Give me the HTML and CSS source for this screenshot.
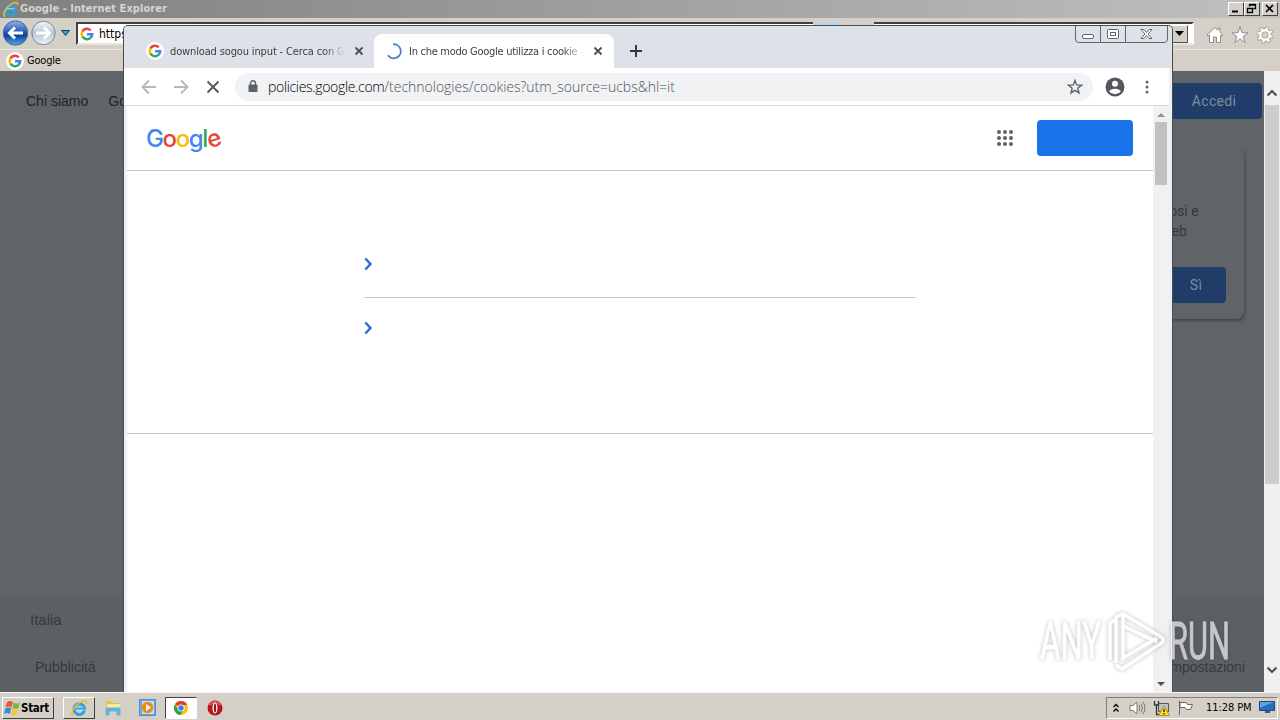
FILE: index.html
```html
<!DOCTYPE html>
<html lang="it">
  <head>
    <meta charset="UTF-8" />
    <meta name="viewport" content="width=device-width, initial-scale=1.0" />
    <title>Desktop</title>
    <link rel="stylesheet" href="styles.css">
  </head>
  <body>
    <svg class="defs" width="0" height="0">
      <symbol id="google-g" viewBox="0 0 18 18">
        <circle cx="9" cy="9" r="9" fill="#fff" />
        <g fill="none" stroke-width="2.6">
          <path d="M4.4 6.5A5.2 5.2 0 0 1 12.7 5.3" stroke="#ea4335" />
          <path d="M4.4 6.5A5.2 5.2 0 0 0 4.5 11.7" stroke="#fbbc05" />
          <path d="M4.5 11.7A5.2 5.2 0 0 0 12.5 12.9" stroke="#34a853" />
          <path d="M12.5 12.9A5.2 5.2 0 0 0 14.2 9.2H9" stroke="#4285f4" />
        </g>
      </symbol>
      <symbol id="ie-logo" viewBox="0 0 18 18">
        <path d="M14.4 11.4A5.3 5.3 0 1 1 14.4 8.9H5" fill="none" stroke="#2f9fe0" stroke-width="3" />
        <path d="M5 8.2H13" stroke="#a7e2fb" stroke-width="1" />
        <path d="M3.2 16.5C-.5 15 4 7 9.5 3.6C14 .8 17.6.8 16.3 4.5" fill="none" stroke="#f3bd27" stroke-width="1.6" />
      </symbol>
    </svg>

    <div class="desktop">
      <section class="ie">
        <header class="ie-title">
          <svg class="ie-icon" width="17" height="17"><use href="#ie-logo" /></svg>
          <h1>Google - Internet Explorer</h1>
          <div class="ie-controls">
            <span><svg width="13" height="11"><path d="M3 8.5h6" stroke="#000" stroke-width="2" /></svg></span>
            <span><svg width="13" height="11"><path d="M4.5 3.5V1.5h6v4h-2M4 2h7M2.5 5.5h5v4h-5zM2 5.5h6" fill="none" stroke="#000" stroke-width="1.3" /></svg></span>
            <span class="close"><svg width="13" height="11"><path d="M3 2l7 7M10 2l-7 7" stroke="#000" stroke-width="1.7" /></svg></span>
          </div>
        </header>
        <div class="ie-toolbar">
          <svg class="ie-nav" width="72" height="28" viewBox="0 0 72 28">
            <defs>
              <linearGradient id="back-fill" x2="0" y2="1">
                <stop offset="0" stop-color="#91b7e9" />
                <stop offset=".45" stop-color="#255cb9" />
                <stop offset=".6" stop-color="#0d3f9c" />
                <stop offset="1" stop-color="#4cb1f1" />
              </linearGradient>
              <linearGradient id="forward-fill" x2="0" y2="1">
                <stop offset="0" stop-color="#f4f7fa" />
                <stop offset=".5" stop-color="#b9c4d1" />
                <stop offset="1" stop-color="#edf5fb" />
              </linearGradient>
            </defs>
            <circle cx="15.500" cy="14" r="12.200" fill="url(#back-fill)" stroke="#4d6484" />
            <circle cx="43.500" cy="14" r="11.700" fill="url(#forward-fill)" stroke="#7b8794" />
            <path d="M23 14H10M15 8.500L9.500 14l5.500 5.500" fill="none" stroke="#fff" stroke-width="3" />
            <path d="M36 14h13M44 8.500l5.500 5.500-5.500 5.500" fill="none" stroke="#fff" stroke-width="3" />
            <path d="M61.500 11.500h8l-4 5z" fill="#3b9bcf" stroke="#123e63" />
          </svg>
          <div class="ie-address">
            <svg width="18" height="18"><use href="#google-g" /></svg>
            <span>https</span>
            <i class="go-buttons"></i>
            <b><svg width="9" height="5"><path d="M0 0h9L4.500 5z" /></svg></b>
          </div>
          <div class="ie-tools">
            <svg width="18" height="18" viewBox="0 0 18 18"><path d="M1 9l8-7.500 3 2.800V2h2v4.200L17 9l-1 1.200-1.500-1.200V16.500h-4V11h-3v5.500h-4V9L2 10.200z" fill="#fff" stroke="#8f8f8f" /></svg>
            <svg width="18" height="18" viewBox="0 0 18 18"><path d="M9 .800l2 6h6.200l-5 3.700 2 6.200L9 12.800l-5.200 3.900 2-6.200-5-3.700H7z" fill="#fff" stroke="#8f8f8f" /></svg>
            <svg width="18" height="18" viewBox="0 0 18 18"><circle cx="9" cy="9" r="6.800" fill="none" stroke="#8b8b8b" stroke-width="3.400" stroke-dasharray="3 2.340" /><circle cx="9" cy="9" r="4.700" fill="none" stroke="#8b8b8b" stroke-width="4" /><circle cx="9" cy="9" r="6.600" fill="none" stroke="#fff" stroke-width="2.500" stroke-dasharray="2.200 2.984" stroke-dashoffset="-.4" /><circle cx="9" cy="9" r="4.700" fill="none" stroke="#fff" stroke-width="2.400" /><circle cx="9" cy="9" r="2.700" fill="#d4d0c8" /></svg>
          </div>
        </div>
        <div class="ie-favorites">
          <svg width="18" height="18"><use href="#google-g" /></svg>
          <span>Google</span>
        </div>
        <div class="ie-body">
          <div class="ie-page">
            <nav class="ie-links">
              <a>Chi siamo</a>
              <a>Google</a>
              <button class="signin">Accedi</button>
            </nav>
            <div class="ie-card">
              <p>riosi e<br>web</p>
              <button>Sì</button>
            </div>
            <footer class="ie-footer">
              <p class="country">Italia</p>
              <p class="footer-links"><span>Pubblicità</span><span>Impostazioni</span></p>
            </footer>
          </div>
          <div class="ie-scroll">
            <svg width="12" height="8"><path d="M1.500 6.500L6 2l4.500 4.500" /></svg>
            <i></i>
            <svg width="12" height="8"><path d="M1.500 1.500L6 6l4.500-4.500" /></svg>
          </div>
        </div>
      </section>

      <section class="chrome">
        <div class="window-controls">
          <svg width="93" height="17" viewBox="0 0 93 17" fill="none" stroke="#62656b">
            <path d="M.500 0v13q0 3.500 3.500 3.500h85q3.500 0 3.500-3.500V0M25.500 0v16M50.500 0v16" />
            <rect x="7.500" y="8.500" width="11" height="4" rx="1.500" fill="#fff" />
            <rect x="32.500" y="3.500" width="11" height="9" rx="1" fill="#fff" />
            <rect x="35.500" y="6.500" width="5" height="3" />
            <path d="M66 3.500h3l2.500 3 2.500-3h3l-4 4.500 4 4.500h-3l-2.500-3-2.500 3h-3l4-4.500z" fill="#fff" />
          </svg>
        </div>
        <div class="tabs">
          <div class="tab">
            <svg width="18" height="18"><use href="#google-g" /></svg>
            <span class="tab-text first">download sogou input - Cerca con Go</span>
            <svg class="x" width="10" height="10"><path d="M1.500 1.500l7 7M8.500 1.500l-7 7" /></svg>
          </div>
          <div class="tab active">
            <svg width="18" height="18"><path d="M8 2.300A7 7 0 1 1 3 13.200" fill="none" stroke="#5480cb" stroke-width="1.900" /></svg>
            <span class="tab-text second">In che modo Google utilizza i cookie –</span>
            <svg class="x" width="10" height="10"><path d="M1.500 1.500l7 7M8.500 1.500l-7 7" /></svg>
          </div>
          <svg class="new-tab" width="12" height="12"><path d="M6 0v12M0 6h12" stroke="#343a45" stroke-width="2" /></svg>
        </div>
        <div class="chrome-toolbar">
          <svg width="16" height="16" viewBox="0 0 16 16"><path d="M15 8H2M8 1.500L1.500 8 8 14.500" fill="none" stroke="#b7b8ba" stroke-width="1.900" /></svg>
          <svg width="16" height="16" viewBox="0 0 16 16"><path d="M1 8h13M8 1.500L14.500 8 8 14.500" fill="none" stroke="#b7b8ba" stroke-width="1.900" /></svg>
          <svg width="16" height="16" viewBox="0 0 16 16"><path d="M2.500 2.500l11 11M13.500 2.500l-11 11" stroke="#55585c" stroke-width="1.900" /></svg>
          <div class="omnibox">
            <svg width="10" height="13" viewBox="0 0 10 13"><path d="M2.500 5V3.200a2.500 2.500 0 0 1 5 0V5" fill="none" stroke="#5f6368" stroke-width="1.400" /><rect x=".500" y="4.500" width="9" height="7.500" rx="1" fill="#5f6368" /></svg>
            <p><span class="host">policies.google.com</span><span class="path">/technologies/cookies?utm_source=ucbs&amp;hl=it</span></p>
            <svg class="star" width="16" height="16" viewBox="0 0 16 16"><path d="M8 1.500l1.700 4.400 4.800.300-3.700 3 1.200 4.700L8 11.300l-4 2.600 1.200-4.700-3.700-3 4.800-.300z" fill="none" stroke="#5f6368" stroke-width="1.400" /></svg>
          </div>
          <svg class="avatar" width="20" height="20" viewBox="0 0 20 20"><circle cx="10" cy="10" r="9.500" fill="#54585d" /><circle cx="10" cy="6.700" r="3" fill="#fff" /><path d="M4.200 14.200C5.500 10.800 14.500 10.800 15.800 14.200A7.200 7.200 0 0 1 4.200 14.200" fill="#fff" /></svg>
          <svg class="dots" width="4" height="14" viewBox="0 0 4 14" fill="#5f6368"><circle cx="2" cy="2" r="1.500" /><circle cx="2" cy="7" r="1.500" /><circle cx="2" cy="12" r="1.500" /></svg>
        </div>
        <div class="chrome-body">
          <main>
            <header class="site-header">
              <div class="logo"><span class="blue">G</span><span class="red">o</span><span class="yellow">o</span><span class="blue">g</span><span class="green">l</span><span class="red e">e</span></div>
              <svg class="apps" width="16" height="16" fill="#5f6368"><circle cx="2" cy="2" r="2" /><circle cx="8" cy="2" r="2" /><circle cx="14" cy="2" r="2" /><circle cx="2" cy="8" r="2" /><circle cx="8" cy="8" r="2" /><circle cx="14" cy="8" r="2" /><circle cx="2" cy="14" r="2" /><circle cx="8" cy="14" r="2" /><circle cx="14" cy="14" r="2" /></svg>
              <button class="blue-button" aria-label="Accedi"></button>
            </header>
            <div class="site-nav">
              <div class="nav-row"><svg width="9" height="14"><path d="M1.300 1.500L6.500 7l-5.200 5.500" /></svg></div>
              <div class="nav-row"><svg width="9" height="14"><path d="M1.300 1.500L6.500 7l-5.200 5.500" /></svg></div>
            </div>
          </main>
          <div class="chrome-scroll">
            <svg width="8" height="4"><path d="M0 4h8L4 0z" fill="#929292" /></svg>
            <i></i>
            <svg width="8" height="4"><path d="M0 0h8L4 4z" fill="#505050" /></svg>
          </div>
        </div>
      </section>

      <svg class="watermark" width="204" height="70" viewBox="0 0 204 70">
        <g class="mark-text">
          <text x="6" y="54" textLength="61" lengthAdjust="spacingAndGlyphs">ANY</text>
          <text x="135" y="54" textLength="61" lengthAdjust="spacingAndGlyphs">RUN</text>
        </g>
        <path class="mark-line" d="M76 55V18l5-3M82 58V12l7-3 40 24v4L88 64l-6-4M89 10v45M89 21l34 16M89 53l34-20" />
      </svg>

      <footer class="taskbar">
        <button class="start">
          <svg width="17" height="16" viewBox="0 0 17 16"><path d="M3 2q3-2 6 0L7.500 7.500q-3-2-6 0z" fill="#e9592c" /><path d="M10 2.500q3 2 6 0L14.500 8q-3 2-6 0z" fill="#73b842" /><path d="M1.300 8.500q3-2 6 0L5.700 14q-3-2-5.700 0z" fill="#358fd8" /><path d="M8.300 9q3 2 6 0l-1.600 5.500q-3 2-6 0z" fill="#f9c42d" /></svg>
          Start
        </button>
        <div class="task raised"><svg width="18" height="18"><use href="#ie-logo" /></svg></div>
        <div class="task"><svg width="18" height="18" viewBox="0 0 18 18"><path d="M2 2h5l1 2h8v6H2z" fill="#e0bf50" /><path d="M3 5h13v6H3z" fill="#f8e99c" /><path d="M2 16V9h14v7h-3v-4H5v4z" fill="#58b4dd" stroke="#6bb5d8" /></svg></div>
        <div class="task"><svg width="17" height="17"><rect x=".500" y=".500" width="16" height="16" fill="#6da9dc" stroke="#4d8fcb" /><rect x="3" y="2" width="12" height="13" fill="#b9dcf5" /><circle cx="8.500" cy="8.500" r="5.800" fill="#ef8a15" /><path d="M7 5l5 3.500L7 12z" fill="#fff" /></svg></div>
        <div class="task pressed"><svg width="16" height="16" viewBox="0 0 16 16"><circle cx="8" cy="8" r="7" fill="#fbc116" /><path d="M8 8L2 4.300A7 7 0 0 1 14.300 5H8z" fill="#e33b2e" /><path d="M1.900 4.500A7 7 0 0 0 7.500 15L10.500 9.500 5 9z" fill="#27a34d" /><circle cx="8" cy="8" r="3.500" fill="#fff" /><circle cx="8" cy="8" r="2.700" fill="#3c7de0" /></svg></div>
        <div class="task"><svg width="16" height="16"><circle cx="8" cy="8" r="7.500" fill="#b5151c" /><path d="M2.500 5Q8-1 13.500 5" fill="none" stroke="#df5d5e" stroke-width="2" /><ellipse cx="8" cy="8" rx="2.500" ry="5.500" fill="#fff" /><ellipse cx="8" cy="8" rx="1.200" ry="4.500" fill="#a40e16" /></svg></div>
        <div class="tray">
          <svg width="8" height="10" viewBox="0 0 8 10"><path d="M1.500 4L4 1.500 6.500 4M1.500 8.500L4 6l2.500 2.500" fill="none" stroke="#000" stroke-width="1.300" /></svg>
          <svg width="17" height="16" viewBox="0 0 17 16" fill="#fff" stroke="#777"><path d="M1 5.500h3L8 2v12l-4-3.500H1z" /><path d="M10 5q2 3 0 6M12 3.500q3 4.500 0 9M14 2q4 6 0 12" fill="none" /></svg>
          <svg width="17" height="16" viewBox="0 0 17 16"><path d="M5.500 3.500h10v8h-10zM8 13.500h6" fill="#bdc0c5" stroke="#555" /><path d="M1.500 1v4h4V1M3.500 5v9.500h4" fill="none" stroke="#333" stroke-width="1.300" /><path d="M11 6l5.500 9.500h-11z" fill="#ffdc26" stroke="#b69416" /><path d="M11 9v3M11 13v1.500" stroke="#222" stroke-width="1.300" /></svg>
          <svg width="17" height="16" viewBox="0 0 17 16"><path d="M2.500 1v14M3 2.500h6l1.500 2h5l-2 5H9.500l-1.500-2H3z" fill="#fff" stroke="#666" /></svg>
          <time>11:28 PM</time>
          <svg width="16" height="13" viewBox="0 0 16 13"><path d="M.500.500h15v9H.500z" fill="#246bc2" stroke="#214781" /><path d="M1 1h14L1 7z" fill="#5aa3e4" /><path d="M6 10h5v2H6z" fill="#3a5c8b" /></svg>
        </div>
      </footer>
    </div>
  </body>
</html>
```

FILE: styles.css
```css
/* General Styling */
* {
  box-sizing: border-box;
}

body {
  margin: 0;
  overflow: hidden;
  font-family: "DejaVu Sans Condensed", "Open Sans", sans-serif;
}

h1,
p {
  margin: 0;
}

svg {
  display: block;
  flex-shrink: 0;
}

button {
  border: none;
  padding: 0;
}

.defs {
  position: absolute;
}

.desktop {
  position: relative;
  width: 1280px;
  height: 720px;
  display: flex;
  flex-direction: column;
  overflow: hidden;
}

/* Internet Explorer */
.ie {
  height: 692px;
  display: flex;
  flex-direction: column;
  background: #d4d0c8;
}

.ie-title {
  height: 18px;
  display: flex;
  align-items: center;
  padding: 0 2px;
  background: linear-gradient(90deg, #808080, #c0c0c0);
}

.ie-title h1 {
  margin-left: 1px;
  color: #d8d5ce;
  font-family: "DejaVu Sans Condensed", sans-serif;
  font-size: 11px;
  line-height: 18px;
  letter-spacing: 0.04px;
}

.ie-controls {
  display: flex;
  margin-left: auto;
}

.ie-controls span {
  width: 16px;
  height: 14px;
  background: #d4d0c8;
  border: 1px solid #fff;
  border-right-color: #404040;
  border-bottom-color: #404040;
}

.ie-controls .close {
  margin-left: 2px;
}

.ie-toolbar {
  height: 31px;
  display: flex;
  align-items: flex-start;
  padding: 1px 6px 0 0;
}

.ie-address {
  width: 1118px;
  height: 23px;
  margin: 3px 0 0 4px;
  display: flex;
  align-items: center;
  background: #fff;
  border: 2px solid #404040;
  border-right-color: #fff;
  border-bottom-color: #e8e5df;
  padding-left: 0;
  font-size: 12px;
}

.ie-address span {
  margin-left: 3px;
}

.go-buttons {
  width: 61px;
  height: 3px;
  margin: -21px 0 0 686px;
  background: linear-gradient(90deg, #b9d4ed 28px, #d4d0c8 28px);
}

.ie-address b {
  width: 17px;
  height: 18px;
  margin: 0 4px 0 auto;
  display: grid;
  place-items: center;
  background: #d4d0c8;
  border: 1px solid #fff;
  border-right-color: #505050;
  border-bottom-color: #505050;
}

.ie-tools {
  display: flex;
  gap: 7px;
  margin: 7px 0 0 auto;
}

.ie-favorites {
  height: 22px;
  display: flex;
  align-items: center;
  padding-left: 6px;
  gap: 3px;
  font-size: 11px;
  letter-spacing: -0.2px;
  border-top: 1px solid #ece9e2;
}

.ie-body {
  height: 621px;
  display: flex;
}

.ie-page {
  width: 1264px;
  display: flex;
  flex-direction: column;
  background: #606466;
  color: #36393c;
  font-family: "Liberation Sans", Arial, sans-serif;
  font-size: 14px;
}

.ie-links {
  display: flex;
  align-items: center;
  gap: 20px;
  padding: 12px 2px 0 26px;
}

.ie-links a {
  color: #202326;
}

.ie-page button {
  height: 36px;
  background: #203d69;
  color: #7f8b9e;
  border-radius: 4px;
  font-family: Roboto, sans-serif;
  font-size: 14px;
  letter-spacing: 0.3px;
}

.ie-links .signin {
  width: 96px;
  margin-left: auto;
}

.ie-card {
  width: 380px;
  height: 172px;
  margin: 28px 20px 0 auto;
  padding: 54px 18px 16px 0;
  display: flex;
  flex-direction: column;
  align-items: flex-end;
  border-radius: 8px;
  box-shadow: 1px 2px 3px rgba(20, 24, 27, 0.4);
  font-family: Roboto, sans-serif;
  line-height: 20px;
}

.ie-card p {
  width: 65px;
}

.ie-card button {
  width: 60px;
  margin-top: auto;
}

.ie-footer {
  margin-top: auto;
  height: 95px;
  background: #5c6063;
}

.country {
  height: 47px;
  padding-left: 30px;
  line-height: 46px;
  font-size: 15px;
  border-bottom: 1px solid #575b5d;
}

.footer-links {
  display: flex;
  justify-content: space-between;
  padding: 0 19px 0 35px;
  line-height: 46px;
}

.ie-scroll {
  width: 16px;
  padding: 18px 1px;
  background: #f0f0f0;
  display: flex;
  flex-direction: column;
  align-items: center;
}

.ie-scroll path {
  fill: none;
  stroke: #505050;
  stroke-width: 2.2;
}

.ie-scroll i {
  width: 14px;
  height: 379px;
  margin: 8px 0 auto;
  background: #cdcdcd;
}

/* Chrome window */
.chrome {
  position: absolute;
  left: 123px;
  top: 25px;
  width: 1050px;
  height: 667px;
  display: flex;
  flex-direction: column;
  border: 1px solid #494b50;
  border-bottom: none;
  border-radius: 5px 5px 0 0;
  background: #eef0f3;
  padding: 0 3px;
  overflow: hidden;
}

.window-controls {
  position: absolute;
  left: 951px;
  top: 0;
}

.tabs {
  height: 42px;
  margin: 0 -3px;
  padding: 8px 0 0 13px;
  display: flex;
  background: #dee1e8;
}

.tab {
  width: 237px;
  height: 34px;
  display: flex;
  align-items: center;
  padding-left: 9px;
  font-size: 11px;
  color: #3c4043;
}

.tab.active {
  width: 240px;
  padding-left: 11px;
  background: #fff;
  border-radius: 8px 8px 0 0;
}

.tab-text {
  width: 175px;
  margin-left: 6px;
  overflow: hidden;
  white-space: nowrap;
  -webkit-mask-image: linear-gradient(90deg, #000 88%, transparent);
  mask-image: linear-gradient(90deg, #000 88%, transparent);
}

.first {
  letter-spacing: -0.14px;
}

.second {
  letter-spacing: -0.28px;
}

.tab .x {
  margin-left: 9px;
}

.tab.active .x {
  margin-left: 9px;
}

.tab .x path {
  stroke: #4a4d52;
  stroke-width: 1.8;
}

.new-tab {
  margin: 11px 0 0 16px;
}

.chrome-toolbar {
  height: 38px;
  margin-left: -3px;
  display: flex;
  align-items: center;
  padding-left: 17px;
  background: #fff;
  border-bottom: 1px solid #d8d9db;
  gap: 16px;
}

.omnibox {
  width: 858px;
  height: 28px;
  margin-left: -2px;
  border-radius: 14px;
  display: flex;
  align-items: center;
  padding: 0 10px 0 13px;
  background: #f0f2f4;
  font-family: "Open Sans", sans-serif;
  font-size: 14px;
  font-weight: 300;
}

.omnibox p {
  margin-left: 10px;
  margin-top: -1px;
}

.host {
  color: #000;
  letter-spacing: -0.33px;
}

.path {
  color: #50555a;
  letter-spacing: -0.02px;
}

.star {
  margin-left: auto;
}

.avatar {
  margin-left: -4px;
}

.dots {
  margin-left: 4px;
}

.chrome-body {
  flex: 1;
  display: flex;
}

.chrome-body main {
  width: 1026px;
  background: #fff;
}

.site-header {
  height: 65px;
  display: flex;
  align-items: center;
  padding: 0 20px 0 19px;
  border-bottom: 1px solid #c4c5c7;
}

.logo {
  padding-top: 1px;
  font-family: Inter, sans-serif;
  font-size: 24px;
  font-weight: 500;
  line-height: 30px;
  letter-spacing: -1.4px;
}

.logo .e {
  display: inline-block;
  transform: rotate(-18deg);
}

.blue {
  color: #4285f4;
}

.red {
  color: #ea4335;
}

.yellow {
  color: #fbbc05;
}

.green {
  color: #34a853;
}

.apps {
  margin-left: auto;
}

.blue-button {
  width: 96px;
  height: 36px;
  margin-left: 24px;
  background: #1a73e8;
  border-radius: 4px;
}

.site-nav {
  height: 263px;
  padding: 62px 237px 0;
  border-bottom: 1px solid #c4c5c7;
}

.nav-row {
  height: 65px;
  display: flex;
  align-items: center;
  padding-bottom: 2px;
}

.nav-row:first-child {
  border-bottom: 1px solid #c4c5c7;
}

.nav-row:last-child {
  height: 61px;
}

.nav-row path {
  fill: none;
  stroke: #2368d8;
  stroke-width: 2.3;
}

.chrome-scroll {
  width: 16px;
  padding: 7px 2px 6px;
  display: flex;
  flex-direction: column;
  align-items: center;
  background: #f1f1f1;
}

.chrome-scroll i {
  width: 12px;
  height: 63px;
  margin: 5px 0 auto;
  background: #c1c1c1;
}

/* Watermark */
.watermark {
  position: absolute;
  left: 1034px;
  top: 605px;
  filter: drop-shadow(0 0 2px rgba(60, 60, 60, 0.5));
  opacity: 0.65;
}

.mark-text {
  fill: #fff;
  stroke: #fff;
  stroke-width: 0.8;
  font-family: Roboto, sans-serif;
  font-size: 52px;
}

.mark-line {
  fill: none;
  stroke: #fff;
  stroke-width: 3.5;
  stroke-linejoin: round;
}

/* Taskbar */
.taskbar {
  height: 28px;
  display: flex;
  align-items: center;
  padding: 3px 2px 1px;
  background: #d4d0c8;
  border-top: 1px solid #f5f3ef;
}

.start {
  width: 52px;
  height: 22px;
  margin-right: 9px;
  display: flex;
  align-items: center;
  gap: 0;
  padding-left: 1px;
  background: #d4d0c8;
  border: 1px solid #fff;
  border-right-color: #404040;
  border-bottom-color: #404040;
  color: #000;
  font-family: "DejaVu Sans Condensed", sans-serif;
  font-size: 11.5px;
  font-weight: bold;
  letter-spacing: -0.3px;
}

.task {
  width: 32px;
  height: 22px;
  margin-right: 2px;
  display: grid;
  place-items: center;
  border: 1px solid transparent;
}

.raised {
  border-color: #fff #404040 #404040 #fff;
}

.pressed {
  background: #fff;
  border-color: #404040 #fff #fff #404040;
}

.tray {
  width: 172px;
  height: 22px;
  margin-left: auto;
  display: flex;
  align-items: center;
  padding: 0 0 0 5px;
  gap: 7px;
  border: 1px solid #808080;
  border-right-color: #fff;
  border-bottom-color: #fff;
}

.tray svg:first-child {
  margin-right: 2px;
}

.tray time {
  margin-left: 5px;
  font-size: 11px;
  white-space: nowrap;
  letter-spacing: -0.08px;
}
```
